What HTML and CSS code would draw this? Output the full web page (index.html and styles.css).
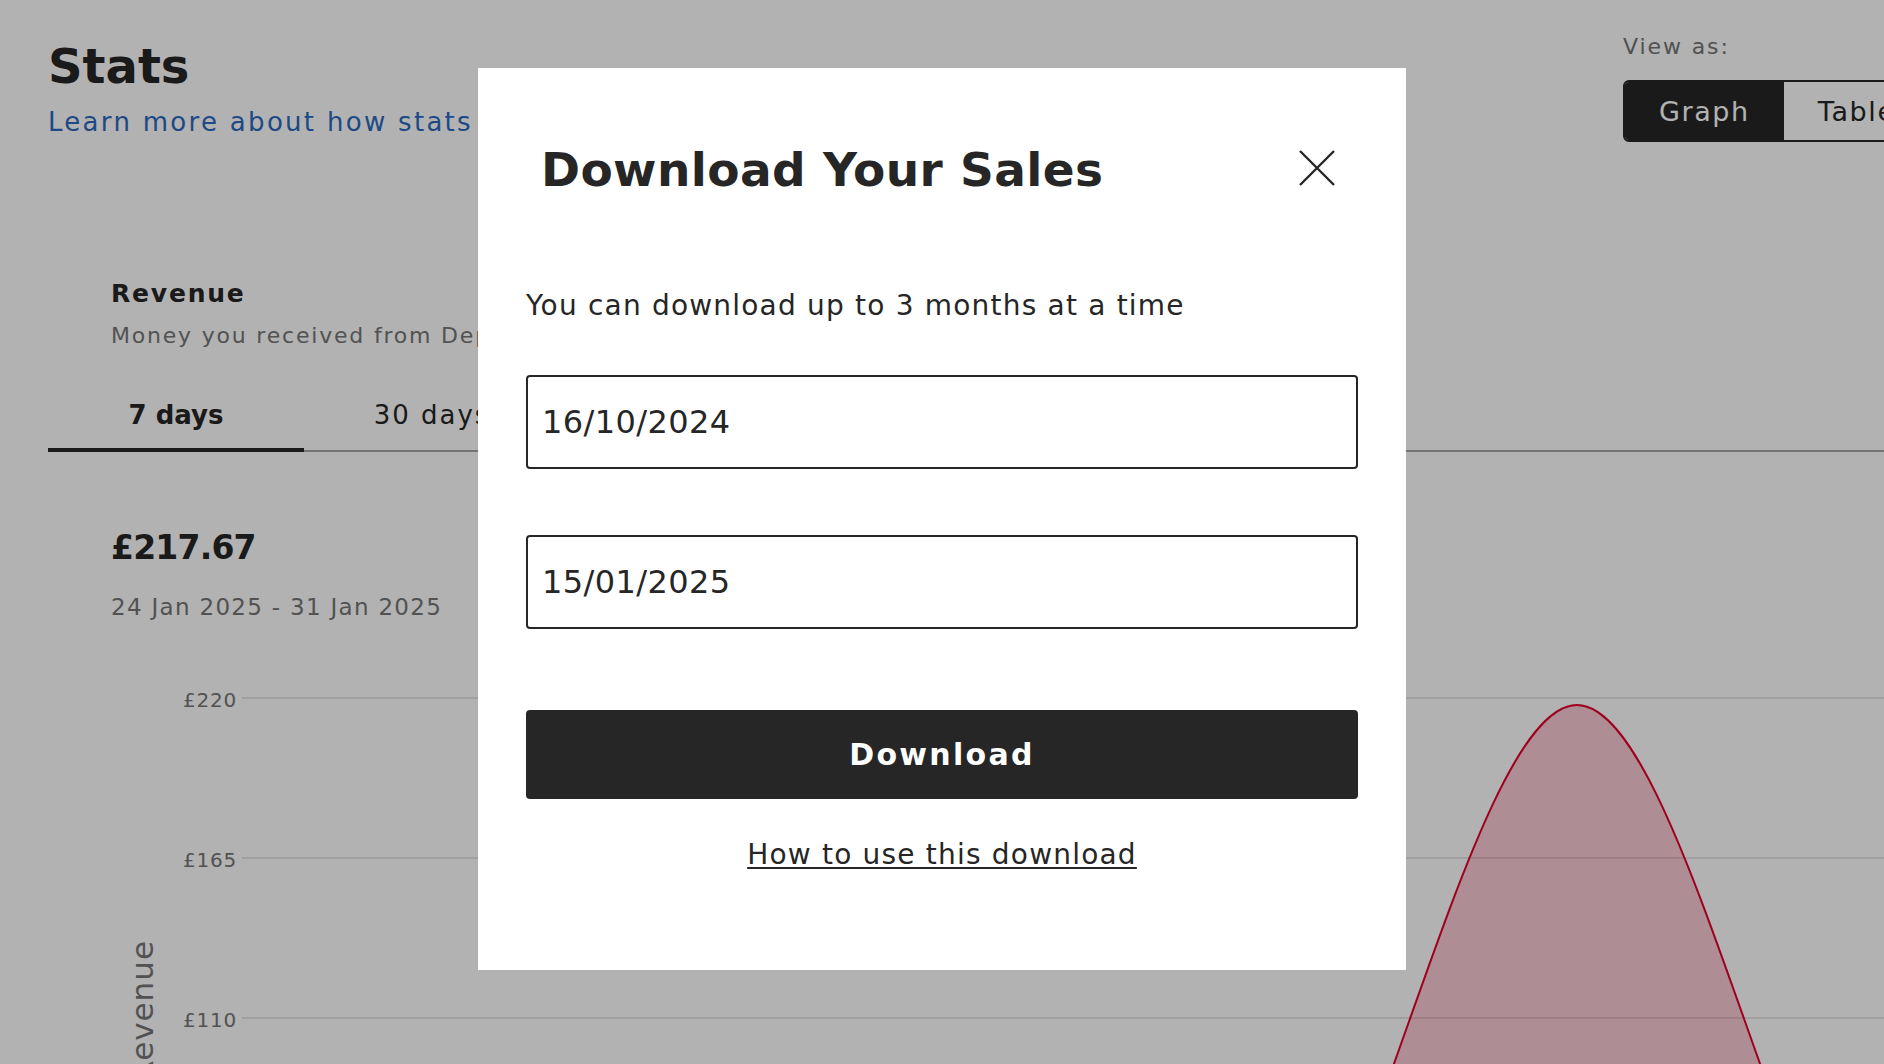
FILE: index.html
```html
<!DOCTYPE html>
<html lang="en">
<head>
  <meta charset="UTF-8">
  <meta name="viewport" content="width=device-width, initial-scale=1.0">
  <title>Stats</title>
  <link rel="stylesheet" href="styles.css">
</head>
<body>
  <div class="page">
    <!-- Page header -->
    <header class="page-head">
      <div class="title-block">
        <h1>Stats</h1>
        <a class="learn" href="#">Learn more about how stats work</a>
      </div>
      <div class="view-as">
        <span class="view-label">View as:</span>
        <div class="toggle">
          <button class="toggle-btn active">Graph</button>
          <button class="toggle-btn">Table</button>
        </div>
      </div>
    </header>

    <!-- Revenue summary -->
    <section class="metric">
      <h2>Revenue</h2>
      <p>Money you received from Depop sales, after fees</p>
    </section>

    <div class="tabs">
      <div class="tab active">7 days</div>
      <div class="tab">30 days</div>
      <div class="tab">90 days</div>
      <div class="tab">12 months</div>
    </div>

    <div class="total">
      <strong>£217.67</strong>
      <span>24 Jan 2025 - 31 Jan 2025</span>
    </div>

    <!-- Chart -->
    <svg class="chart" width="1897" height="700" viewBox="0 0 1897 700">
      <g class="grid">
        <line x1="194" y1="58" x2="1897" y2="58"/>
        <line x1="194" y1="218" x2="1897" y2="218"/>
        <line x1="194" y1="378" x2="1897" y2="378"/>
        <line x1="194" y1="538" x2="1897" y2="538"/>
        <line x1="194" y1="698" x2="1897" y2="698"/>
      </g>
      <g class="axis">
        <text x="189" y="67">£220</text>
        <text x="189" y="227">£165</text>
        <text x="189" y="387">£110</text>
        <text x="189" y="547">£55</text>
        <text x="189" y="707">£0</text>
      </g>
      <text class="axis-title" transform="translate(105 300) rotate(-90)">Revenue</text>
      <path class="area" d="M194 698 L1193 698 C1305 698 1417 65 1529 65 C1641 65 1753 698 1865 698 L1897 698 Z"/>
      <path class="line" d="M194 698 L1193 698 C1305 698 1417 65 1529 65 C1641 65 1753 698 1865 698 L1897 698"/>
    </svg>
  </div>

  <!-- Download modal -->
  <div class="overlay">
    <div class="modal">
      <div class="modal-head">
        <h2>Download Your Sales</h2>
        <button class="close" aria-label="Close">
          <svg width="36" height="36" viewBox="0 0 36 36">
            <path d="M1 1 L35 35 M35 1 L1 35" stroke="#262626" stroke-width="2.4" fill="none"/>
          </svg>
        </button>
      </div>
      <p class="modal-note">You can download up to 3 months at a time</p>
      <input class="date-field first" type="text" value="16/10/2024">
      <input class="date-field" type="text" value="15/01/2025">
      <button class="download-btn">Download</button>
      <a class="help-link" href="#">How to use this download</a>
    </div>
  </div>
</body>
</html>
```

FILE: styles.css
```css
/* Global Styles */
* {
  margin: 0;
  padding: 0;
  box-sizing: border-box;
}

html,
body {
  overflow: hidden;
}

body {
  font-family: "DejaVu Sans", "Liberation Sans", sans-serif;
  color: #262626;
  background: #ffffff;
  width: 1884px;
  height: 1064px;
}

/* Page */
.page {
  width: 1993px;
  padding: 38px 48px 0;
}

.page-head {
  display: flex;
  justify-content: space-between;
  align-items: flex-start;
}

.page-head h1 {
  font-size: 48px;
  line-height: 1.2;
  font-weight: 700;
}

.learn {
  display: block;
  margin-top: 11px;
  font-size: 26px;
  line-height: 1.2;
  letter-spacing: 2.3px;
  color: #2a69bf;
  text-decoration: none;
  white-space: nowrap;
}

/* View toggle */
.view-as {
  width: 322px;
  margin-top: -4px;
}

.view-label {
  display: block;
  font-size: 22px;
  line-height: 1.2;
  letter-spacing: 1.9px;
  color: #747474;
}

.toggle {
  display: flex;
  height: 62px;
  margin-top: 20px;
  border: 2px solid #262626;
  border-radius: 6px;
  overflow: hidden;
}

.toggle-btn {
  flex: none;
  padding: 0 34px;
  border: 0;
  background: #ffffff;
  font-family: inherit;
  font-size: 27px;
  letter-spacing: 1.6px;
  color: #262626;
}

.toggle-btn.active {
  background: #262626;
  color: #ffffff;
}

/* Revenue block */
.metric {
  margin-top: 137px;
  padding-left: 63px;
}

.metric h2 {
  font-size: 25px;
  line-height: 1.2;
  letter-spacing: 1.8px;
}

.metric p {
  margin-top: 14px;
  font-size: 22px;
  line-height: 1.2;
  letter-spacing: 1.8px;
  color: #767676;
  white-space: nowrap;
}

/* Tabs */
.tabs {
  display: flex;
  margin-top: 50px;
  border-bottom: 2px solid #a6a6a6;
}

.tab {
  width: 256px;
  padding-bottom: 17px;
  margin-bottom: -2px;
  border-bottom: 4px solid transparent;
  text-align: center;
  font-size: 26px;
  line-height: 1.2;
  letter-spacing: 2px;
}

.tab.active {
  font-weight: 700;
  letter-spacing: 0;
  border-bottom-color: #262626;
}

/* Total */
.total {
  margin-top: 76px;
  padding-left: 63px;
}

.total strong {
  display: block;
  font-size: 33px;
  line-height: 1.2;
  letter-spacing: -0.8px;
}

.total span {
  display: block;
  margin-top: 26px;
  font-size: 23px;
  line-height: 1.2;
  letter-spacing: 1.3px;
  color: #767676;
}

/* Chart */
.chart {
  display: block;
  margin-top: 19px;
  overflow: visible;
}

.grid line {
  stroke: #e6e6e6;
  stroke-width: 2;
}

.axis text {
  font-size: 20px;
  letter-spacing: 0.8px;
  fill: #767676;
  text-anchor: end;
}

.axis-title {
  font-size: 31px;
  letter-spacing: 1px;
  fill: #767676;
  text-anchor: end;
}

.area {
  fill: rgba(228, 0, 43, 0.2);
}

.line {
  fill: none;
  stroke: #e4002b;
  stroke-width: 2;
}

/* Modal */
.overlay {
  position: fixed;
  inset: 0;
  display: flex;
  justify-content: center;
  align-items: flex-start;
  padding-top: 68px;
  background: rgba(0, 0, 0, 0.3);
}

.modal {
  width: 928px;
  padding: 74px 48px 98px;
  background: #ffffff;
}

.modal-head {
  display: flex;
  justify-content: space-between;
  align-items: center;
  padding: 0 23px 0 15px;
}

.modal-head h2 {
  font-size: 47px;
  line-height: 1.2;
  font-weight: 700;
  letter-spacing: 0.4px;
}

.close {
  display: flex;
  width: 36px;
  height: 36px;
  margin-bottom: 4px;
  border: 0;
  background: none;
}

.modal-note {
  margin-top: 91px;
  font-size: 28px;
  line-height: 1.2;
  letter-spacing: 1.2px;
}

.date-field {
  display: block;
  width: 100%;
  height: 94px;
  margin-top: 66px;
  padding: 0 14px;
  border: 2px solid #262626;
  border-radius: 4px;
  font-family: inherit;
  font-size: 32px;
  letter-spacing: 0.4px;
  color: #262626;
  outline: none;
}

.date-field.first {
  margin-top: 52px;
}

.download-btn {
  display: block;
  width: 100%;
  height: 89px;
  margin-top: 81px;
  border: 0;
  border-radius: 4px;
  background: #262626;
  color: #ffffff;
  font-family: inherit;
  font-size: 30px;
  font-weight: 700;
  letter-spacing: 2.3px;
}

.help-link {
  display: block;
  margin-top: 39px;
  text-align: center;
  font-size: 28px;
  line-height: 1.2;
  letter-spacing: 1.2px;
  color: #262626;
  text-decoration: underline;
  text-decoration-thickness: 2px;
  text-underline-offset: 3px;
}
```
